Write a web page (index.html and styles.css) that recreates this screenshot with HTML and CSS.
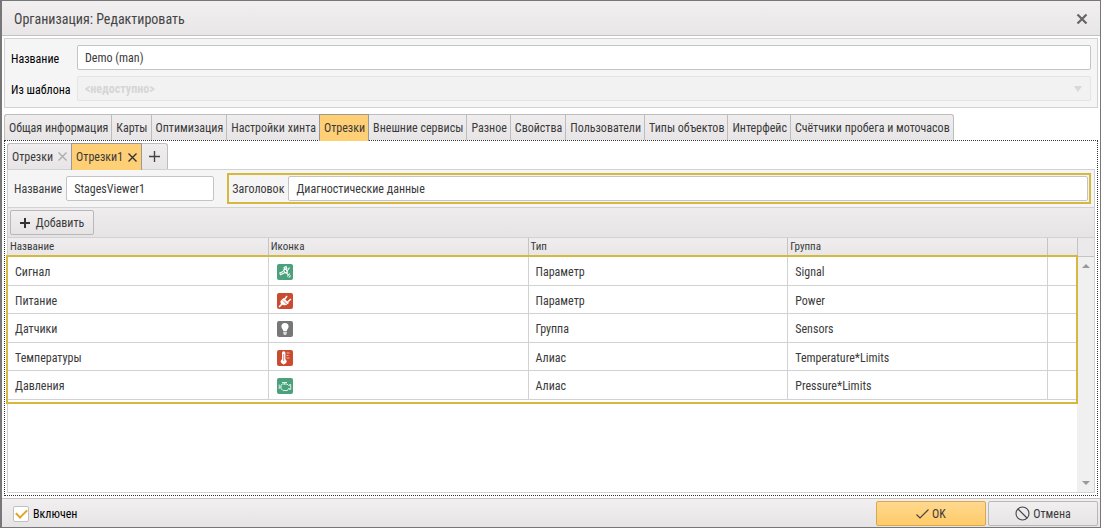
FILE: index.html
```html
<!DOCTYPE html>
<html lang="ru">
<head>
<meta charset="utf-8">
<title>Организация: Редактировать</title>
<link rel="stylesheet" href="styles.css">
</head>
<body>
<form class="dialog">
  <header class="dialog-head">
    <h1 class="dialog-title">Организация: Редактировать</h1>
    <button type="button" class="icon-btn" aria-label="Закрыть">
      <svg width="12" height="12" viewBox="0 0 12 12"><path d="M1.5 1.5l9 9M10.500 1.500l-9 9" stroke="#666" stroke-width="2.200" fill="none"/></svg>
    </button>
  </header>

  <main class="dialog-body">
    <section class="panel">
      <label class="panel-label" for="org-name">Название</label>
      <input class="field" id="org-name" type="text" value="Demo (man)">
      <label class="panel-label" for="org-template">Из шаблона</label>
      <div class="select-wrap">
        <select class="field field-disabled" id="org-template" disabled><option>&lt;недоступно&gt;</option></select>
        <svg class="select-arrow" width="8" height="6" viewBox="0 0 8 6"><path d="M0 0h8L4 6z" fill="#d8d8d8"/></svg>
      </div>
    </section>

    <nav class="tabs">
      <button type="button" class="tab">Общая информация</button>
      <button type="button" class="tab">Карты</button>
      <button type="button" class="tab">Оптимизация</button>
      <button type="button" class="tab">Настройки хинта</button>
      <button type="button" class="tab tab-active">Отрезки</button>
      <button type="button" class="tab">Внешние сервисы</button>
      <button type="button" class="tab">Разное</button>
      <button type="button" class="tab">Свойства</button>
      <button type="button" class="tab">Пользователи</button>
      <button type="button" class="tab">Типы объектов</button>
      <button type="button" class="tab">Интерфейс</button>
      <button type="button" class="tab">Счётчики пробега и моточасов</button>
    </nav>

    <section class="tab-page">
      <nav class="tabs tabs-inner">
        <button type="button" class="tab">Отрезки
          <svg width="9" height="9" viewBox="0 0 9 9"><path d="M.5.5l8 8M8.500.5l-8 8" stroke="#aaa" stroke-width="1.200"/></svg>
        </button>
        <button type="button" class="tab tab-active">Отрезки1
          <svg width="9" height="9" viewBox="0 0 9 9"><path d="M.5.5l8 8M8.500.5l-8 8" stroke="#333" stroke-width="1.400"/></svg>
        </button>
        <button type="button" class="tab tab-add" aria-label="Добавить вкладку">
          <svg width="11" height="11" viewBox="0 0 11 11"><path d="M0 5.500h11M5.500 0v11" stroke="#444" stroke-width="1.400"/></svg>
        </button>
      </nav>

      <div class="page">
        <div class="page-form">
          <div class="pair">
            <label for="stage-name">Название</label>
            <input class="field field-name" id="stage-name" type="text" value="StagesViewer1">
          </div>
          <div class="pair pair-marked">
            <label for="stage-title">Заголовок</label>
            <input class="field" id="stage-title" type="text" value="Диагностические данные">
          </div>
        </div>
        <div class="toolbar">
          <button type="button" class="btn btn-add">
            <svg width="10" height="10" viewBox="0 0 10 10"><path d="M0 5h10M5 0v10" stroke="#333" stroke-width="2"/></svg>Добавить
          </button>
        </div>
        <div class="grid">
          <div class="grid-main">
            <table class="table">
              <colgroup><col class="col-wide"><col class="col-wide"><col class="col-wide"><col class="col-wide"><col class="col-end"></colgroup>
              <thead><tr><th>Название</th><th>Иконка</th><th>Тип</th><th>Группа</th><th></th></tr></thead>
              <tbody>
                <tr><td>Сигнал</td><td><svg class="badge badge-green" viewBox="0 0 16 16"><g fill="none" stroke="#fff" stroke-width="1.100"><path d="M7 3.500l2-1 .8 1.800-2 1zM6.500 6l2.500-1 1.500 3-2.500 1zM6 7.500L2.800 9l.8 1.800L7 9M9.500 9l1.500 1.500M10.500 6.500l2-3M12.800 9.500l-2.500 3M13.500 11.500l-1.500 2"/></g></svg></td><td>Параметр</td><td>Signal</td><td></td></tr>
                <tr><td>Питание</td><td><svg class="badge badge-red" viewBox="0 0 16 16"><path d="M3.500 8L6.500 5l5.500 5L9.500 11.800Q7 13 4.500 11.500Q3 10 3.500 8z" fill="#fff"/><path d="M2 14l3-3M7.500 6.500L10 3M10.500 9l3.500-3" stroke="#fff" stroke-width="1.500"/><path d="M6 7.500l3.500 3.500" stroke="#cb4b30" stroke-width=".8"/></svg></td><td>Параметр</td><td>Power</td><td></td></tr>
                <tr><td>Датчики</td><td><svg class="badge badge-gray" viewBox="0 0 16 16"><path d="M8 2a3.600 3.600 0 0 1 3.600 3.600c0 2-1.600 2.600-1.800 4.400H6.200C6 8.200 4.400 7.600 4.400 5.600A3.600 3.600 0 0 1 8 2zM6.200 10.800h3.600v1H6.200zM6.200 12.300h3.600L9 13.800H7z" fill="#fff"/></svg></td><td>Группа</td><td>Sensors</td><td></td></tr>
                <tr><td>Температуры</td><td><svg class="badge badge-red" viewBox="0 0 16 16"><path d="M5 3a1.700 1.700 0 0 1 3.400 0v6.200a2.800 2.800 0 1 1-3.400 0z" fill="#fff"/><path d="M6.700 4v7" stroke="#cb4b30" stroke-width=".6"/><path d="M9.500 3h3M9.500 5.500h2M9.500 8h3" stroke="#f0b5a8" stroke-width="1"/></svg></td><td>Алиас</td><td>Temperature*Limits</td><td></td></tr>
                <tr><td>Давления</td><td><svg class="badge badge-green" viewBox="0 0 16 16"><path d="M5 4.500h5M7.500 4.500v2M4 7l1.500-1H10l1.500 1.500h1V6.500h1.200v5h-1.200v-1h-1l-1 2H6l-1.500-1.500H4zM2.200 6.500v4.500M2.200 9H4" fill="none" stroke="#d5efe4" stroke-width="1"/></svg></td><td>Алиас</td><td>Pressure*Limits</td><td></td></tr>
              </tbody>
            </table>
          </div>
          <div class="grid-side">
            <div class="grid-corner"></div>
            <div class="scroll">
              <svg width="8" height="4" viewBox="0 0 8 4"><path d="M0 4l4-4 4 4z" fill="#999"/></svg>
              <svg width="8" height="4" viewBox="0 0 8 4"><path d="M0 0l4 4 4-4z" fill="#999"/></svg>
            </div>
          </div>
        </div>
      </div>
    </section>
  </main>

  <footer class="dialog-foot">
    <label class="check"><input class="check-box" type="checkbox" checked>Включен</label>
    <div class="actions">
      <button type="button" class="btn btn-primary">
        <svg width="13" height="10" viewBox="0 0 13 10"><path d="M.5 5.500l3.500 3.500L12.500.5" fill="none" stroke="#444" stroke-width="1.200"/></svg>OK
      </button>
      <button type="button" class="btn">
        <svg width="15" height="15" viewBox="0 0 15 15"><circle cx="7.500" cy="7.500" r="6.500" fill="none" stroke="#444" stroke-width="1.100"/><path d="M3 3l9 9" stroke="#444" stroke-width="1.100"/></svg>Отмена
      </button>
    </div>
  </footer>
</form>
</body>
</html>
```
FILE: styles.css
```css
* { box-sizing: border-box; }

body {
  margin: 0;
  font: 400 12px/16px "Roboto Condensed", "Liberation Sans Narrow", Roboto, sans-serif;
  color: #3a3a3a;
}

input, select, button { font: inherit; color: inherit; margin: 0; }
svg { flex: none; }

.dialog {
  display: flex;
  flex-direction: column;
  min-height: 100vh;
  border: 1px solid #777;
  border-left-width: 2px;
  background: #fff;
}

.dialog-head {
  display: flex;
  align-items: center;
  justify-content: space-between;
  height: 35px;
  padding: 1px 12px 0;
  border-bottom: 1px solid #c4c2c3;
  background: linear-gradient(#f1eff0, #e8e6e7);
}
.dialog-title { margin: 0; font-size: 14px; line-height: 20px; font-weight: 400; color: #444; }
.icon-btn { display: flex; padding: 0; border: 0; background: none; }

.dialog-body {
  flex: 1;
  display: flex;
  flex-direction: column;
  padding: 2px;
}

.panel {
  display: grid;
  grid-template-columns: 60px 1fr;
  gap: 6px;
  align-items: center;
  padding: 6px;
  border: 1px solid #d2d2d2;
  background: #f5f5f5;
  color: #000;
}
.panel-label { padding-top: 2px; white-space: nowrap; }

.field {
  display: block;
  width: 100%;
  min-width: 0;
  height: 25px;
  padding: 1px 7px 0;
  border: 1px solid #c4c4c4;
  border-radius: 2px;
  background: #fff;
  color: #3a3a3a;
  outline: 0;
}
.field-name { width: 148px; }
.select-wrap { position: relative; }
.field-disabled {
  appearance: none;
  border-color: #e4e4e4;
  background: #f2f2f2;
  color: #d6d6d6;
  font-weight: 700;
  opacity: 1;
}
.select-arrow { position: absolute; right: 9px; top: 10px; }

.tabs { display: flex; margin-top: 6px; }
.tab {
  display: flex;
  align-items: center;
  gap: 5px;
  height: 26px;
  padding: 0 3px 0 4px;
  border: 1px solid #bdbdbd;
  border-width: 1px 0 0 1px;
  background: linear-gradient(#efedee, #e7e5e6);
  white-space: nowrap;
}
.tab:first-child { border-top-left-radius: 3px; }
.tab:last-child { border-right-width: 1px; border-top-right-radius: 3px; }
.tab-active {
  height: 27px;
  margin-bottom: -1px;
  border-color: #999;
  border-right-width: 1px;
  background: #ffcf75;
  z-index: 1;
}
.tab-active + .tab { border-left-width: 0; }

.tab-page {
  flex: 1;
  display: flex;
  flex-direction: column;
  padding: 2px;
  border: 1px dotted #333;
}
.tabs-inner { margin-top: 0; }
.tabs-inner .tab { padding: 0 4px; }
.tabs-inner .tab-add { padding: 0 7px; }

.page {
  flex: 1;
  display: flex;
  flex-direction: column;
  border: 1px solid #d2d2d2;
}
.page-form {
  display: flex;
  justify-content: space-between;
  gap: 10px;
  padding: 3px;
  border-bottom: 1px solid #d2d2d2;
  background: #f5f5f5;
}
.pair { display: flex; align-items: center; gap: 4px; padding: 2px 3px; }
.pair-marked { flex: 1; padding: 1px 1px 1px 3px; border: 2px solid #d6b83f; }

.toolbar {
  padding: 2px;
  border-bottom: 1px solid #d2d2d2;
  background: linear-gradient(#eeecec, #e6e4e5);
}
.btn {
  display: flex;
  align-items: center;
  justify-content: center;
  gap: 3px;
  width: 110px;
  height: 25px;
  padding: 0;
  border: 1px solid #b8b8b8;
  border-radius: 2px;
  background: linear-gradient(#f1eff0, #e6e4e5);
}
.btn-add { width: 84px; gap: 6px; }
.btn-primary { border-color: #d9a74e; background: linear-gradient(#ffd88f, #ffcb69); }

.grid { flex: 1; display: flex; }
.grid-main { flex: 1; }
.table {
  position: relative;
  width: 100%;
  border-collapse: separate;
  border-spacing: 0;
  table-layout: fixed;
}
.table::after {
  content: "";
  position: absolute;
  inset: 17px -1px -4px -2px;
  border: 2px solid #d6b83f;
}
.col-end { width: 30px; }
.table th {
  height: 19px;
  padding: 0 2px;
  border-left: 1px solid #c4c4c4;
  border-bottom: 1px solid #c4c4c4;
  background: linear-gradient(#efedee, #e8e6e7);
  font-size: 11px;
  font-weight: 400;
  text-align: left;
}
.table td {
  height: 29px;
  padding: 2px 7px 0;
  border-left: 1px solid #d2d2d2;
  border-bottom: 1px solid #d2d2d2;
}
.table th:first-child,
.table td:first-child { border-left: 0; }
.table tr:nth-child(even) td { height: 28px; }
.badge { display: block; width: 16px; height: 16px; border-radius: 2px; margin-left: 1px; }
.badge-green { background: #4aa17c; }
.badge-red { background: #cb4b30; }
.badge-gray { background: #777; }

.grid-side { width: 17px; display: flex; flex-direction: column; }
.grid-corner {
  height: 19px;
  border-left: 1px solid #c4c4c4;
  border-bottom: 1px solid #c4c4c4;
  background: #ebe9ea;
}
.scroll {
  flex: 1;
  display: flex;
  flex-direction: column;
  align-items: center;
  justify-content: space-between;
  padding: 7px 0;
  background: #f0f0f0;
}

.dialog-foot {
  display: flex;
  align-items: center;
  justify-content: space-between;
  padding: 2px 2px 1px 11px;
  border-top: 1px solid #c4c2c3;
  background: linear-gradient(#f1eff0, #e6e4e5);
}
.check { display: flex; align-items: center; gap: 4px; color: #000; }
.check-box {
  appearance: none;
  display: grid;
  place-items: center;
  width: 16px;
  height: 16px;
  border: 1px solid #c0c0c0;
  border-radius: 2px;
  background: #fff;
}
.check-box:checked::before {
  content: "";
  width: 9px;
  height: 5px;
  margin-top: -2px;
  border: solid #dfa526;
  border-width: 0 0 2px 2px;
  transform: rotate(-45deg);
}
.actions { display: flex; gap: 2px; }
```
